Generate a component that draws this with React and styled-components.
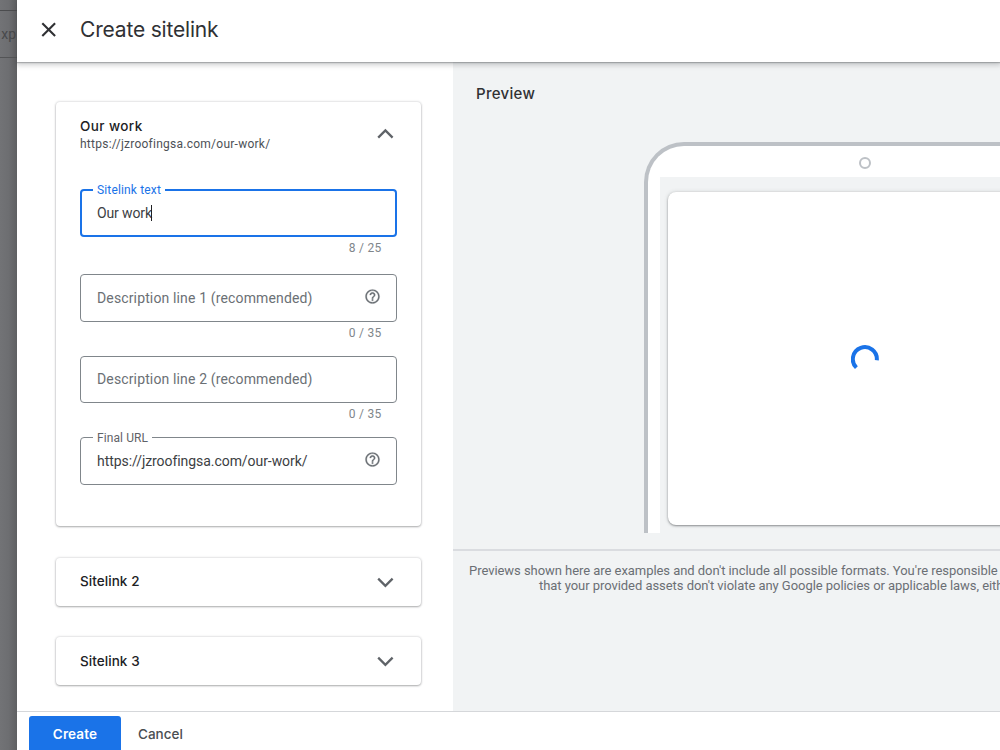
import React, { useState } from 'react';
import styled, { createGlobalStyle, css } from 'styled-components';

const GlobalStyle = createGlobalStyle`
  * {
    box-sizing: border-box;
  }

  body {
    margin: 0;
    overflow: hidden;
    font-family: Roboto, "Liberation Sans", sans-serif;
    color: #3c4043;
  }
`;

const display = css`
  font-family: Inter, "Open Sans", sans-serif;
`;

const Screen = styled.div`
  display: flex;
  width: 100vw;
  height: 750px;
  overflow: hidden;
`;

/* the page that stays visible behind the drawer */
const Backdrop = styled.div`
  flex: 0 0 17px;
  overflow: hidden;
  background: linear-gradient(to right, #727376 0%, #6d6e71 50%, #5f6062 100%);
`;

const BackdropTab = styled.div`
  display: flex;
  justify-content: flex-end;
  align-items: center;
  height: 48px;
  margin-top: 10px;
  padding-right: 1px;
  border-top: 1px solid #4b4c4e;
  border-bottom: 1px solid #535456;
  font-size: 14px;
  color: #48494b;
`;

const Drawer = styled.div`
  flex: 1;
  min-width: 0;
  display: flex;
  flex-direction: column;
  background: #fff;
`;

const Header = styled.header`
  position: relative;
  z-index: 1;
  flex: 0 0 62px;
  display: flex;
  align-items: center;
  gap: 23px;
  padding: 0 0 3px 24px;
  background: #fff;
  box-shadow: 0 1px 1px rgba(60, 64, 67, 0.3), 0 2px 5px 1px rgba(60, 64, 67, 0.25);
`;

const Title = styled.h1`
  ${display}
  margin: 0;
  padding-bottom: 1px;
  font-size: 21px;
  font-weight: 400;
  letter-spacing: -0.18px;
  color: #303134;
`;

const IconButton = styled.button`
  display: flex;
  padding: 0;
  border: 0;
  background: none;
  color: ${props => props.$color || '#5f6368'};
`;

const Body = styled.div`
  flex: 0 0 649px;
  display: flex;
  overflow: hidden;
`;

const FormColumn = styled.div`
  flex: 0 0 436px;
  display: flex;
  flex-direction: column;
  gap: 31.5px;
  padding: 40px 32px 0 39px;
`;

const Card = styled.section`
  flex: 0 0 ${props => props.$height}px;
  padding: 0 24px;
  border-radius: 4px;
  background: #fff;
  box-shadow: 0 1px 2px rgba(60, 64, 67, 0.35), 0 0 2px 1px rgba(60, 64, 67, 0.13);
`;

const CardHeader = styled.div`
  display: flex;
  align-items: center;
  justify-content: space-between;
  height: ${props => props.$height}px;
`;

const CardHeading = styled.div`
  padding-top: 3px;
`;

const CardTitle = styled.div`
  ${display}
  font-size: 13.5px;
  line-height: 17px;
  font-weight: 500;
  letter-spacing: ${props => props.$spacing || 0}px;
  color: #202124;
`;

const CardUrl = styled.div`
  font-size: 12px;
  line-height: 18px;
  letter-spacing: 0.25px;
  color: #4d5156;
`;

const Fields = styled.div`
  display: flex;
  flex-direction: column;
  padding-top: 24px;
`;

const FieldBox = styled.div`
  display: flex;
  align-items: center;
  position: relative;
  height: ${props => (props.$active ? 48 : 47.5)}px;
  padding: 0 ${props => (props.$active ? 14 : 15)}px 0 ${props => (props.$active ? 15 : 16)}px;
  border: ${props => (props.$active ? '2px solid #1a73e8' : '1px solid #80868b')};
  border-radius: 4px;
`;

/* sits over the outline and cuts it */
const FieldLabel = styled.span`
  position: absolute;
  top: ${props => (props.$active ? -9 : -8)}px;
  left: ${props => (props.$active ? 11 : 12)}px;
  padding: 0 4px;
  background: #fff;
  font-size: 12px;
  line-height: 16px;
  letter-spacing: ${props => (props.$active ? 0.15 : 0.1)}px;
  color: ${props => (props.$active ? '#1a73e8' : '#5f6368')};
`;

const FieldValue = styled.span`
  flex: 1;
  display: flex;
  align-items: center;
  font-size: 14px;
  line-height: 20px;
  letter-spacing: ${props => props.$spacing || 0}px;
  color: ${props => (props.$placeholder ? '#6b7075' : '#3c4043')};
`;

const Caret = styled.i`
  width: 1px;
  height: 16px;
  margin-left: -1px;
  background: #202124;
`;

const Counter = styled.div`
  height: ${props => props.$height}px;
  padding: 3px 15.5px 0 0;
  font-size: 12px;
  line-height: 16px;
  letter-spacing: 0.25px;
  text-align: right;
  color: #80868b;
`;

const PreviewColumn = styled.div`
  flex: 0 0 823px;
  display: flex;
  flex-direction: column;
  background: #f1f3f4;
`;

const PreviewTitle = styled.h2`
  ${display}
  height: 80px;
  margin: 0;
  padding: 22px 0 0 23px;
  font-size: 15px;
  line-height: 20px;
  font-weight: 500;
  letter-spacing: 0.3px;
  color: #303134;
`;

const Phone = styled.div`
  align-self: center;
  width: 441px;
  height: 391px;
  padding: 0 12px;
  border: solid #bdc1c6;
  border-width: 4px 4px 0;
  border-radius: 40px 40px 0 0;
  background: #fff;
`;

const PhoneTop = styled.div`
  display: flex;
  align-items: center;
  justify-content: center;
  height: 31px;
  padding-top: 3px;
`;

const Camera = styled.span`
  width: 12px;
  height: 12px;
  border: 2px solid #bdc1c6;
  border-radius: 50%;
`;

const PhoneScreen = styled.div`
  height: 356px;
  padding: 15px 7px 8px 8px;
  background: #f1f3f4;
`;

const AdCard = styled.div`
  display: flex;
  align-items: center;
  justify-content: center;
  height: 333px;
  border-radius: 8px;
  background: #fff;
  box-shadow: 0 1px 2px rgba(60, 64, 67, 0.5), 0 0 4px rgba(60, 64, 67, 0.18);
`;

const Disclaimer = styled.div`
  margin-top: 16px;
  padding: 12px 0 0 16px;
  border-top: 2px solid #dadce0;
  font-size: 13px;
  line-height: 15px;
  letter-spacing: -0.05px;
  color: #6b6f74;
  white-space: nowrap;
`;

const DisclaimerLine = styled.div`
  padding-left: ${props => props.$indent || 0}px;
`;

const Footer = styled.footer`
  flex: 1;
  display: flex;
  align-items: flex-start;
  gap: 17px;
  padding: 4px 0 0 12px;
  border-top: 1px solid #d5d7da;
  background: #fff;
  overflow: hidden;
`;

const Button = styled.button`
  ${display}
  height: 36px;
  padding: 0;
  border: 0;
  border-radius: 3px;
  font-size: 13.5px;
  font-weight: 500;
  background: none;
  color: #4a4e52;

  ${props => props.$primary && css`
    width: 92px;
    background: #1a73e8;
    color: #fff;
    font-weight: 600;
    letter-spacing: 0.15px;
  `}
`;

function Chevron({ up }) {
    return (
        <svg width="24" height="24" viewBox="0 0 24 24" fill="none" stroke="currentColor" strokeWidth="2.3">
            <path d={up ? 'M5.2 15.6 12.4 8.4l7.2 7.2' : 'M5.2 8.6 12.4 15.8l7.2-7.2'} />
        </svg>
    );
}

function HelpIcon() {
    return (
        <svg width="17" height="17" viewBox="0 0 24 24" fill="#6b7075" stroke="#6b7075" strokeWidth="0.3">
            <path d="M11 18h2v-2h-2v2zm1-16C6.48 2 2 6.48 2 12s4.48 10 10 10 10-4.48 10-10S17.52 2 12 2zm0 18c-4.41 0-8-3.59-8-8s3.59-8 8-8 8 3.59 8 8-3.59 8-8 8zm0-14c-2.21 0-4 1.79-4 4h2c0-1.1.9-2 2-2s2 .9 2 2c0 2-3 1.75-3 5h2c0-2.25 3-2.5 3-5 0-2.21-1.79-4-4-4z" />
        </svg>
    );
}

const HelpSlot = styled.span`
  display: flex;
  padding-bottom: 3.5px;
`;

function Field({ label, value, placeholder, active, help, spacing }) {
    return (
        <FieldBox $active={active}>
            {label && <FieldLabel $active={active}>{label}</FieldLabel>}
            <FieldValue $placeholder={!value} $spacing={spacing}>
                {value || placeholder}
                {active && <Caret />}
            </FieldValue>
            {help && <HelpSlot><HelpIcon /></HelpSlot>}
        </FieldBox>
    );
}

function App() {

    const [text] = useState('Our work');
    const [url] = useState('https://jzroofingsa.com/our-work/');

    return (
        <Screen>
            <GlobalStyle />
            <Backdrop>
                <BackdropTab>xp</BackdropTab>
            </Backdrop>
            <Drawer>
                <Header>
                    <IconButton $color="#303134" aria-label="Close">
                        <svg width="16" height="16" viewBox="0 0 16 16" fill="none" stroke="currentColor" strokeWidth="2.1">
                            <path d="M1.3 1.3l12.8 12.8M14.1 1.3 1.3 14.1" />
                        </svg>
                    </IconButton>
                    <Title>Create sitelink</Title>
                </Header>
                <Body>
                    <FormColumn>
                        <Card $height={424}>
                            <CardHeader $height={63}>
                                <CardHeading>
                                    <CardTitle $spacing={0.4}>{text}</CardTitle>
                                    <CardUrl>{url}</CardUrl>
                                </CardHeading>
                                <IconButton aria-label="Collapse"><Chevron up /></IconButton>
                            </CardHeader>
                            <Fields>
                                <Field label="Sitelink text" value={text} active spacing={-0.12} />
                                <Counter $height={37}>8 / 25</Counter>
                                <Field placeholder="Description line 1 (recommended)" help spacing={0.14} />
                                <Counter $height={34}>0 / 35</Counter>
                                <Field placeholder="Description line 2 (recommended)" spacing={0.14} />
                                <Counter $height={34}>0 / 35</Counter>
                                <Field label="Final URL" value={url} help spacing={-0.06} />
                            </Fields>
                        </Card>
                        {['Sitelink 2', 'Sitelink 3'].map(name => (
                            <Card key={name} $height={48}>
                                <CardHeader $height={48}>
                                    <CardTitle $spacing={0.06}>{name}</CardTitle>
                                    <IconButton aria-label="Expand"><Chevron /></IconButton>
                                </CardHeader>
                            </Card>
                        ))}
                    </FormColumn>
                    <PreviewColumn>
                        <PreviewTitle>Preview</PreviewTitle>
                        <Phone>
                            <PhoneTop><Camera /></PhoneTop>
                            <PhoneScreen>
                                <AdCard>
                                    <svg width="28" height="28" viewBox="0.8 0.5 28 28" fill="none" stroke="#1a73e8" strokeWidth="4">
                                        <path d="M6.2 23.2A12 12 0 1 1 26.6 15.8" />
                                    </svg>
                                </AdCard>
                            </PhoneScreen>
                        </Phone>
                        <Disclaimer>
                            <DisclaimerLine>
                                Previews shown here are examples and don't include all possible formats. You're responsible
                            </DisclaimerLine>
                            <DisclaimerLine $indent={70}>
                                that your provided assets don't violate any Google policies or applicable laws, either
                            </DisclaimerLine>
                        </Disclaimer>
                    </PreviewColumn>
                </Body>
                <Footer>
                    <Button $primary>Create</Button>
                    <Button>Cancel</Button>
                </Footer>
            </Drawer>
        </Screen>
    );
}

export default App;
